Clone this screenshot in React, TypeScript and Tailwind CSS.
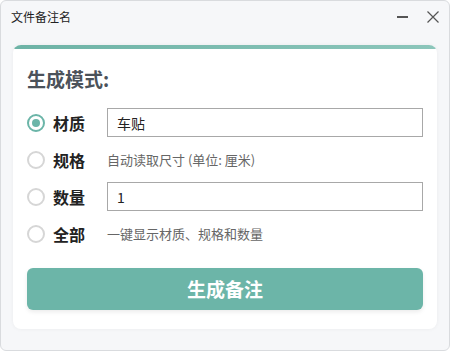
import React, { useState } from "react";

const font = { fontFamily: '"Noto Sans CJK SC", "Noto Sans", sans-serif' };

function Radio({ checked }: { checked: boolean }) {
  return (
    <div
      className={
        "w-[18px] h-[18px] rounded-full border-2 flex items-center justify-center bg-white shrink-0 " +
        (checked ? "border-[#6bb5a8]" : "border-[#d6d6d6]")
      }
    >
      {checked && <div className="w-[8px] h-[8px] rounded-full bg-[#6bb5a8]" />}
    </div>
  );
}

export default function App() {
  const [mode, setMode] = useState("material");
  const rows = [
    { key: "material", label: "材质", kind: "input", value: "车贴" },
    { key: "spec", label: "规格", kind: "text", value: "自动读取尺寸 (单位: 厘米)" },
    { key: "qty", label: "数量", kind: "input", value: "1" },
    { key: "all", label: "全部", kind: "text", value: "一键显示材质、规格和数量" },
  ];
  return (
    <div style={font} className="w-[450px] h-[351px] bg-[#f6f7f9] border border-[#d9dbde] rounded-[6px] flex flex-col overflow-hidden">
      <div className="h-[32px] flex items-center pl-[10px] pr-[10px] shrink-0">
        <span className="text-[12px] text-[#222] flex-1 leading-none">文件备注名</span>
        <div className="w-[30px] flex justify-center items-center">
          <div className="w-[11px] h-[1.5px] bg-[#555]" />
        </div>
        <div className="w-[22px] flex justify-end items-center">
          <svg width="12" height="12" viewBox="0 0 12 12">
            <path d="M0.5 0.5 L11.5 11.5 M11.5 0.5 L0.5 11.5" stroke="#555" strokeWidth="1.2" />
          </svg>
        </div>
      </div>
      <div className="mx-[12px] mt-[12px] h-[284px] bg-white rounded-[8px] overflow-hidden shadow-[0_0_4px_rgba(0,0,0,0.05)] flex flex-col">
        <div className="h-[4px] bg-gradient-to-r from-[#6db3a6] to-[#8cc6bb] shrink-0" />
        <div className="px-[14px] pt-[18px] flex flex-col">
          <div className="text-[19px] font-bold text-[#4b525a] leading-none h-[22px] flex items-center">生成模式:</div>
          <div className="flex flex-col mt-[19px] gap-[8px]">
            {rows.map((r) => (
              <div key={r.key} className="flex items-center h-[29px]" onClick={() => setMode(r.key)}>
                <Radio checked={mode === r.key} />
                <span className="ml-[8px] w-[54px] text-[16px] font-bold text-[#222] leading-none">{r.label}</span>
                {r.kind === "input" ? (
                  <input
                    defaultValue={r.value}
                    className="flex-1 h-[29px] border border-[#a8a8a8] px-[9px] text-[14px] text-[#222] outline-none"
                    style={font}
                  />
                ) : (
                  <span className="text-[13px] text-[#666] leading-none">{r.value}</span>
                )}
              </div>
            ))}
          </div>
          <button className="mt-[20px] h-[42px] rounded-[6px] bg-[#6cb5a8] text-white text-[19px] font-bold shadow-[0_2px_4px_rgba(0,0,0,0.08)]" style={font}>
            生成备注
          </button>
        </div>
      </div>
    </div>
  );
}
